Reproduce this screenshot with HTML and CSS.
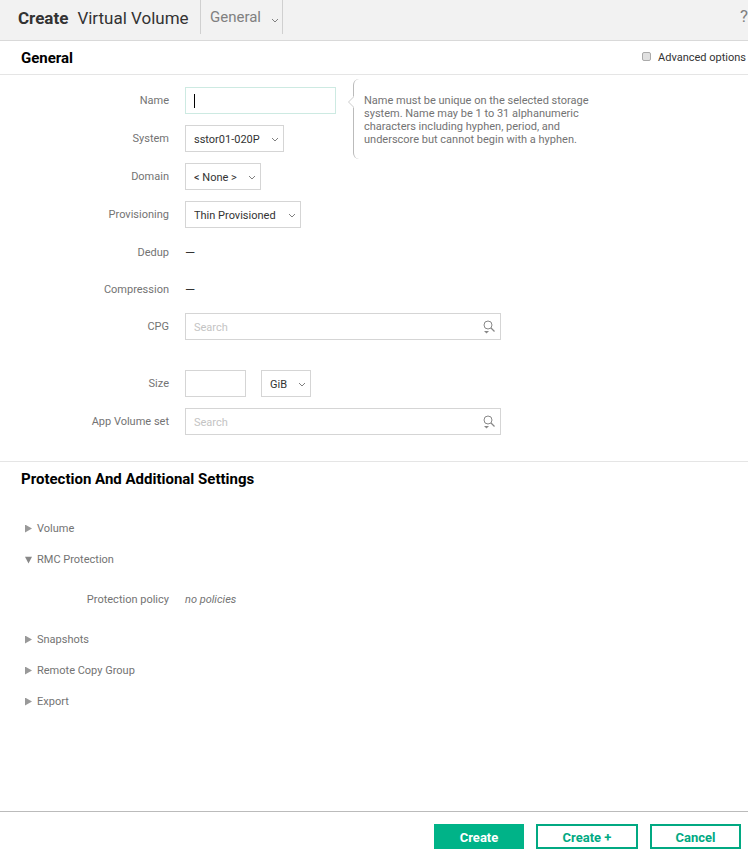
FILE: index.html
```html
<!DOCTYPE html>
<html lang="en">
<head>
<meta charset="utf-8">
<meta name="viewport" content="width=device-width, initial-scale=1">
<title>Create Virtual Volume</title>
<link rel="stylesheet" href="styles.css">
</head>
<body>
<svg class="defs" aria-hidden="true">
  <symbol id="chevron" viewBox="0 0 8 5"><path d="M1 1l3 3 3-3" fill="none" stroke="currentColor"/></symbol>
  <symbol id="search" viewBox="0 0 12 14">
    <circle cx="5" cy="5" r="4" fill="none" stroke="currentColor"/>
    <path d="M8 8l3.500 3.500" fill="none" stroke="currentColor" stroke-width="1.200"/>
    <path d="M1 11h5l-2.500 2.500z" fill="currentColor"/>
  </symbol>
</svg>
<header class="topbar">
  <h1 class="title"><strong>Create</strong> <span>Virtual Volume</span></h1>
  <button class="panel-menu" type="button">General <svg class="chevron"><use href="#chevron"/></svg></button>
  <a class="help" href="#help" aria-label="Help">?</a>
</header>
<form class="dialog">
  <section class="section">
    <div class="section-head">
      <h2>General</h2>
      <label class="advanced"><input type="checkbox"> Advanced options</label>
    </div>
    <div class="fields">
      <div class="row">
        <label for="name">Name</label>
        <div class="control">
          <span class="name-box"><input class="text" id="name" type="text" aria-describedby="name-hint"></span>
          <p class="hint" id="name-hint">Name must be unique on the selected storage system. Name may be 1 to 31 alphanumeric characters including hyphen, period, and underscore but cannot begin with a hyphen.<svg class="hint-arrow" viewBox="0 0 6 12"><path d="M6 0v12L1 6z" fill="#fff"/><path d="M5.500 1L.5 6l5 5" fill="none" stroke="currentColor"/></svg></p>
        </div>
      </div>
      <div class="row">
        <label for="system">System</label>
        <div class="control"><span class="select system"><select id="system"><option>sstor01-020P</option></select><svg class="chevron"><use href="#chevron"/></svg></span></div>
      </div>
      <div class="row">
        <label for="domain">Domain</label>
        <div class="control"><span class="select domain"><select id="domain"><option>&lt; None &gt;</option></select><svg class="chevron"><use href="#chevron"/></svg></span></div>
      </div>
      <div class="row">
        <label for="provisioning">Provisioning</label>
        <div class="control"><span class="select provisioning"><select id="provisioning"><option>Thin Provisioned</option></select><svg class="chevron"><use href="#chevron"/></svg></span></div>
      </div>
      <div class="row plain"><span>Dedup</span><span class="value">—</span></div>
      <div class="row plain"><span>Compression</span><span class="value">—</span></div>
      <div class="row spaced">
        <label for="cpg">CPG</label>
        <div class="control"><span class="search"><input class="text" id="cpg" type="text" placeholder="Search"><svg class="glass"><use href="#search"/></svg></span></div>
      </div>
      <div class="row">
        <label for="size">Size</label>
        <div class="control size">
          <input class="text" id="size" type="text">
          <span class="select unit"><select aria-label="Size unit"><option>GiB</option></select><svg class="chevron"><use href="#chevron"/></svg></span>
        </div>
      </div>
      <div class="row">
        <label for="appset">App Volume set</label>
        <div class="control"><span class="search"><input class="text" id="appset" type="text" placeholder="Search"><svg class="glass"><use href="#search"/></svg></span></div>
      </div>
    </div>
  </section>
  <section class="section settings">
    <h2>Protection And Additional Settings</h2>
    <div class="groups">
      <details><summary>Volume</summary></details>
      <details open><summary>RMC Protection</summary>
        <div class="row policy"><span>Protection policy</span><em>no policies</em></div>
      </details>
      <details><summary>Snapshots</summary></details>
      <details><summary>Remote Copy Group</summary></details>
      <details><summary>Export</summary></details>
    </div>
  </section>
  <footer class="actions">
    <button class="btn primary" type="submit">Create</button>
    <button class="btn wide" type="button">Create +</button>
    <button class="btn" type="button">Cancel</button>
  </footer>
</form>
</body>
</html>
```

FILE: styles.css
```css
* { box-sizing: border-box; }

body {
  margin: 0;
  min-height: 100vh;
  display: flex;
  flex-direction: column;
  background: #fff;
  color: #737373;
  font: 11px/13px Roboto, "Liberation Sans", sans-serif;
}

h1, h2, p { margin: 0; }

button, input, select { font: inherit; }

.defs { display: none; }

.topbar {
  display: flex;
  align-items: center;
  height: 41px;
  background: #f2f2f2;
  border-bottom: 1px solid #d9d9d9;
  overflow: hidden;
}

.title {
  display: flex;
  gap: 9px;
  width: 200px;
  padding: 0 0 4px 18px;
  font-size: 17px;
  line-height: 20px;
  font-weight: 400;
  color: #333;
  white-space: nowrap;
}

.title strong { font-weight: 700; }

.panel-menu {
  align-self: flex-start;
  display: flex;
  align-items: center;
  justify-content: space-between;
  width: 83px;
  height: 34px;
  padding: 0 3px 0 9px;
  border: solid #d0d0d0;
  border-width: 0 1px;
  background: none;
  color: #808080;
  font-size: 15px;
}

.chevron {
  width: 8px;
  height: 5px;
  color: #808080;
}

.panel-menu .chevron { margin-top: 6px; }

.help {
  margin-left: auto;
  padding-bottom: 8px;
  color: #808080;
  font-size: 17px;
  line-height: 20px;
  text-decoration: none;
}

.dialog {
  flex: 1;
  display: flex;
  flex-direction: column;
}

h2 {
  color: #000;
  font-size: 15px;
  line-height: 18px;
  font-weight: 700;
}

.section-head {
  display: flex;
  align-items: center;
  justify-content: space-between;
  height: 34px;
  padding: 0 2px 0 21px;
  border-bottom: 1px solid #e5e5e5;
}

.advanced {
  display: flex;
  align-items: center;
  gap: 7px;
  color: #333;
}

.advanced input {
  appearance: none;
  width: 9px;
  height: 9px;
  margin: 0 0 2px;
  border: 1px solid #aaa;
  border-radius: 2px;
  background: #e0e0e0;
}

.advanced input:checked { background: #01a982; }

.fields {
  display: flex;
  flex-direction: column;
  gap: 11px;
  padding: 12px 0 26px;
}

.row {
  display: grid;
  grid-template-columns: 169px 1fr;
  column-gap: 16px;
  align-items: center;
  height: 27px;
}

.row > :first-child { text-align: right; }

.plain { height: 26px; }

.spaced { margin-bottom: 19px; }

.value {
  color: #333;
  font-size: 13px;
}

.control {
  position: relative;
  display: flex;
}

.text, select {
  width: 100%;
  height: 27px;
  padding: 2px 8px 0;
  border: 1px solid #d5d5d5;
  border-radius: 0;
  background: #fff;
  color: #333;
  outline: 0;
}

.text::placeholder { color: #c4c4c4; }

.name-box {
  position: relative;
  width: 151px;
}

.name-box .text { border-color: #cdeae2; }

.name-box::after {
  content: "";
  position: absolute;
  left: 9px;
  top: 7px;
  width: 1px;
  height: 14px;
  background: #000;
}

.hint {
  position: absolute;
  left: 168px;
  top: -8px;
  width: 250px;
  padding: 15px 0 13px 10px;
  border-left: 1px solid #bbb;
  border-radius: 6px;
}

.hint-arrow {
  position: absolute;
  left: -6px;
  top: 17px;
  width: 6px;
  height: 12px;
  color: #ccc;
}

.select, .search {
  display: grid;
  align-items: center;
}

.select > *, .search > * { grid-area: 1 / 1; }

select { appearance: none; }

.select .chevron {
  justify-self: end;
  margin-right: 5px;
  margin-top: 2px;
  pointer-events: none;
}

.system { width: 99px; }
.domain { width: 76px; }
.provisioning { width: 116px; }
.unit { width: 50px; }

.size { gap: 15px; }

.size .text { width: 61px; }

.search { width: 316px; }

.glass {
  justify-self: end;
  width: 12px;
  height: 14px;
  margin-right: 6px;
  color: #888;
}

.settings {
  border-top: 1px solid #e5e5e5;
  padding-top: 8px;
}

.settings h2 { padding-left: 21px; }

.groups {
  display: flex;
  flex-direction: column;
  gap: 18px;
  padding-top: 34px;
}

summary {
  display: flex;
  align-items: center;
  gap: 5px;
  padding-left: 25px;
  cursor: pointer;
}

summary::before {
  content: "";
  width: 7px;
  height: 8px;
  background: #999;
  clip-path: polygon(0 0, 100% 50%, 0 100%);
}

details[open] > summary::before {
  background: #888;
  clip-path: polygon(0 15%, 100% 15%, 50% 100%);
}

.policy { margin: 20px 0 2px; }

.actions {
  display: flex;
  justify-content: flex-end;
  gap: 12px;
  margin-top: auto;
  padding: 12px 7px 3px;
  border-top: 1px solid #bbb;
}

.btn {
  width: 91px;
  height: 25px;
  padding: 2px 0 0;
  border: 2px solid #01a982;
  background: #fff;
  color: #01a982;
  font-size: 13px;
  font-weight: 700;
}

.wide { width: 102px; }

.primary {
  width: 90px;
  border-color: #00b388;
  background: #00b388;
  color: #fff;
}
```
